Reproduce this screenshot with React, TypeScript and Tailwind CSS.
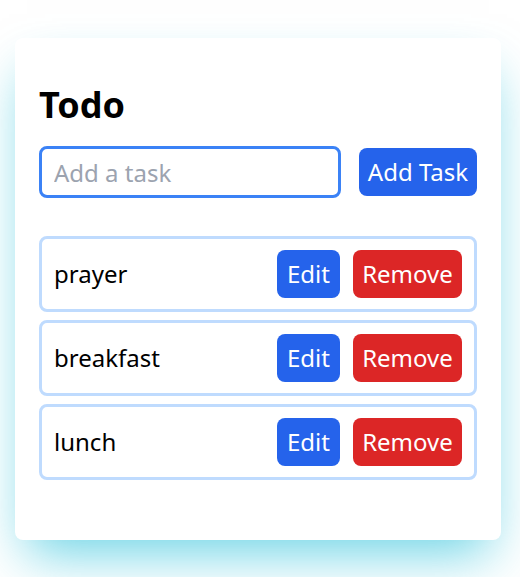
import React, { useState } from 'react'

const font = { fontFamily: '"Segoe UI", "Noto Sans", sans-serif' }

const TaskRow = ({ name }: { name: string }) => (
  <li className="flex items-center justify-between border-[3px] border-[#bfdbfe] rounded-lg pl-3 pr-3 h-[76px]">
    <span className="text-2xl text-black">{name}</span>
    <div className="flex gap-[13px]">
      <button className="bg-[#2563eb] text-white text-2xl rounded-lg w-[63px] h-12 whitespace-nowrap">
        Edit
      </button>
      <button className="bg-[#dc2626] text-white text-2xl rounded-lg w-[109px] h-12 whitespace-nowrap">
        Remove
      </button>
    </div>
  </li>
)

const App = () => {
  const [tasks] = useState<string[]>(['prayer', 'breakfast', 'lunch'])
  const [text, setText] = useState('')

  return (
    <div className="min-h-[577px] bg-white pt-[38px]" style={font}>
      <div className="ml-[15px] w-[486px] bg-white rounded-lg shadow-2xl shadow-[#06b6d4]/60 px-6 pt-[47px] pb-[60px]">
        <h1 className="text-4xl font-bold text-black mb-[21px]">Todo</h1>
        <div className="flex items-center gap-[18px]">
          <input
            value={text}
            onChange={(e) => setText(e.target.value)}
            placeholder="Add a task"
            className="flex-1 min-w-0 h-[52px] border-[3px] border-[#3b82f6] rounded-lg px-3 text-2xl placeholder:text-[#9ca3af] outline-none"
          />
          <button className="bg-[#2563eb] text-white text-2xl rounded-lg w-[118px] h-12 whitespace-nowrap">
            Add Task
          </button>
        </div>
        <ul className="mt-[38px] flex flex-col gap-2">
          {tasks.map((t) => (
            <TaskRow key={t} name={t} />
          ))}
        </ul>
      </div>
    </div>
  )
}

export default App
